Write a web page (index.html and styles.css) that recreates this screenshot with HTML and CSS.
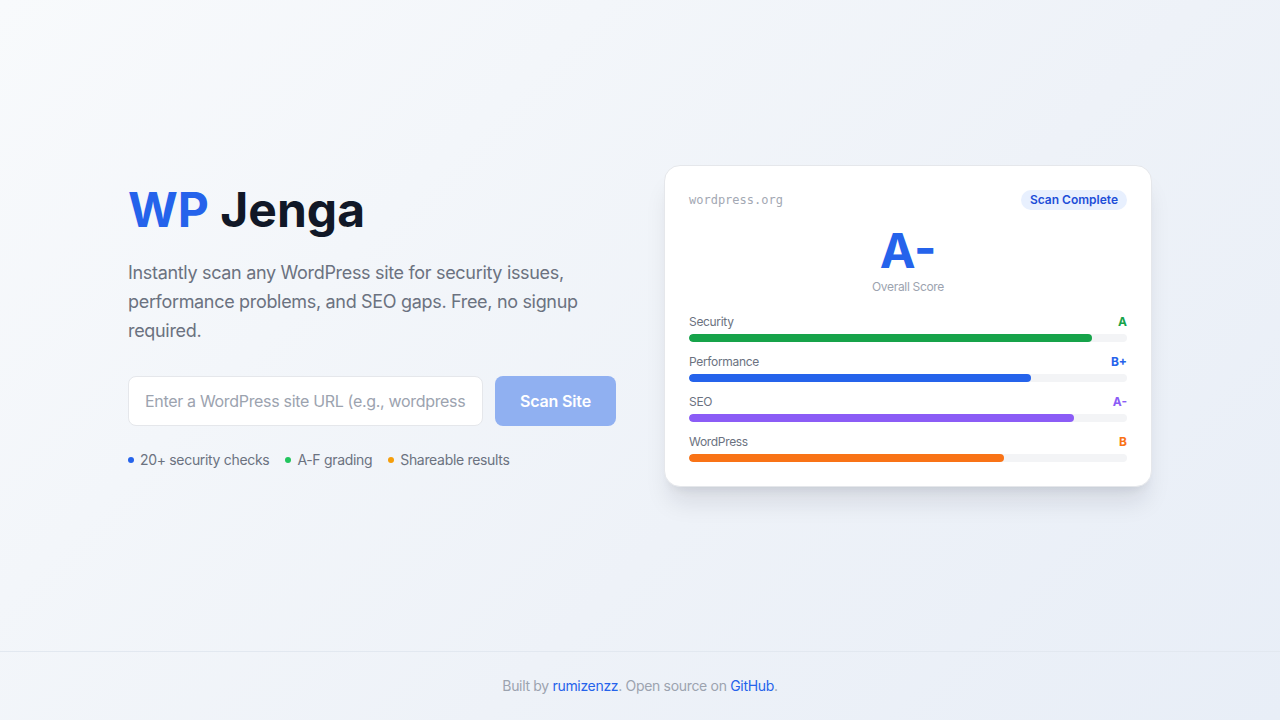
FILE: index.html
```html
<!DOCTYPE html>
<html lang="en">
<head>
<meta charset="utf-8">
<title>WP Jenga</title>
<link rel="stylesheet" href="styles.css">
</head>
<body>
<div class="page">
  <main class="main">
    <div class="container">
      <section class="intro">
        <h1 class="title"><span class="accent">WP</span> Jenga</h1>
        <p class="lead">Instantly scan any WordPress site for security issues, performance problems, and SEO gaps. Free, no signup required.</p>
        <form class="scan-form" onsubmit="return false">
          <input class="url-input" type="text" placeholder="Enter a WordPress site URL (e.g., wordpress.org)">
          <button class="scan-btn" type="button">Scan Site</button>
        </form>
        <ul class="features">
          <li class="feature"><span class="dot dot-blue"></span>20+ security checks</li>
          <li class="feature"><span class="dot dot-green"></span>A-F grading</li>
          <li class="feature"><span class="dot dot-orange"></span>Shareable results</li>
        </ul>
      </section>
      <section class="card">
        <div class="card-head">
          <span class="domain">wordpress.org</span>
          <span class="badge">Scan Complete</span>
        </div>
        <div class="overall">
          <div class="grade">A-</div>
          <div class="overall-label">Overall Score</div>
        </div>
        <div class="metrics">
          <div class="metric">
            <div class="metric-row"><span class="metric-name">Security</span><span class="metric-grade c-green">A</span></div>
            <div class="track"><div class="fill bg-green" style="width:92%"></div></div>
          </div>
          <div class="metric">
            <div class="metric-row"><span class="metric-name">Performance</span><span class="metric-grade c-blue">B+</span></div>
            <div class="track"><div class="fill bg-blue" style="width:78%"></div></div>
          </div>
          <div class="metric">
            <div class="metric-row"><span class="metric-name">SEO</span><span class="metric-grade c-purple">A-</span></div>
            <div class="track"><div class="fill bg-purple" style="width:88%"></div></div>
          </div>
          <div class="metric">
            <div class="metric-row"><span class="metric-name">WordPress</span><span class="metric-grade c-orange">B</span></div>
            <div class="track"><div class="fill bg-orange" style="width:72%"></div></div>
          </div>
        </div>
      </section>
    </div>
  </main>
  <footer class="footer">
    Built by <a href="#">rumizenzz</a>. Open source on <a href="#">GitHub</a>.
  </footer>
</div>
</body>
</html>
```
FILE: styles.css
```css
* { box-sizing: border-box; }
html, body { margin: 0; padding: 0; }
body {
  font-family: Inter, "Noto Sans", "Liberation Sans", sans-serif;
  letter-spacing: -0.02em;
  color: #111827;
  background: linear-gradient(135deg, #f8fafc 0%, #eef2f8 60%, #e8eef7 100%);
  min-height: 720px;
}
.page {
  display: flex;
  flex-direction: column;
  min-height: 720px;
}
.main {
  flex: 1;
  display: flex;
  align-items: center;
  justify-content: center;
}
.container {
  width: 1024px;
  display: grid;
  grid-template-columns: 1fr 1fr;
  gap: 48px;
  align-items: center;
}
.intro { padding-top: 2px; }
.title {
  margin: 0 0 22px;
  font-size: 48px;
  line-height: 52px;
  font-weight: 700;
  letter-spacing: 0;
  color: #111827;
}
.accent { color: #2563eb; }
.lead {
  margin: 0 0 31px;
  font-size: 18px;
  line-height: 29px;
  color: #6b7280;
}
.scan-form {
  display: flex;
  gap: 12px;
  margin: 0 0 24px;
}
.url-input {
  flex: 1;
  min-width: 0;
  height: 50px;
  padding: 0 16px;
  border: 1px solid #e5e7eb;
  border-radius: 8px;
  background: #fff;
  font-family: inherit;
  letter-spacing: -0.02em;
  font-size: 16px;
  color: #111827;
}
.url-input::placeholder { color: #9ca3af; }
.scan-btn {
  width: 121px;
  height: 50px;
  border: 0;
  border-radius: 8px;
  background: #90b0f1;
  color: #fff;
  font-family: inherit;
  letter-spacing: -0.01em;
  font-size: 16px;
  font-weight: 600;
}
.features {
  list-style: none;
  margin: 0;
  padding: 0;
  display: flex;
  gap: 16px;
  font-size: 14px;
  line-height: 20px;
  color: #6b7280;
}
.feature { display: flex; align-items: center; gap: 6px; }
.dot { width: 6px; height: 6px; border-radius: 50%; display: inline-block; }
.dot-blue { background: #2563eb; }
.dot-green { background: #22c55e; }
.dot-orange { background: #f59e0b; }

.card {
  background: #fff;
  border: 1px solid #e5e7eb;
  border-radius: 16px;
  padding: 24px;
  box-shadow: 0 20px 25px -5px rgba(15, 23, 42, 0.10), 0 8px 10px -6px rgba(15, 23, 42, 0.08);
}
.card-head {
  display: flex;
  justify-content: space-between;
  align-items: center;
  height: 20px;
  margin-bottom: 15px;
}
.domain {
  font-family: "DejaVu Sans Mono", "Liberation Mono", monospace;
  letter-spacing: 0;
  font-size: 12px;
  color: #a3a8b3;
}
.badge {
  background: #e8f0fe;
  color: #1d4ed8;
  font-size: 12px;
  font-weight: 600;
  letter-spacing: 0;
  line-height: 20px;
  padding: 0 9px;
  border-radius: 999px;
}
.overall { text-align: center; margin-bottom: 19px; }
.grade {
  font-size: 48px;
  line-height: 52px;
  font-weight: 700;
  letter-spacing: 0;
  color: #2563eb;
}
.overall-label {
  margin-top: 2px;
  font-size: 12px;
  line-height: 16px;
  color: #9ca3af;
}
.metrics { display: flex; flex-direction: column; gap: 11px; }
.metric-row {
  display: flex;
  justify-content: space-between;
  font-size: 12px;
  line-height: 16px;
  margin-bottom: 4px;
}
.metric-name { color: #6b7280; }
.metric-grade { font-weight: 700; letter-spacing: 0; }
.track {
  height: 8px;
  border-radius: 999px;
  background: #f3f4f6;
  overflow: hidden;
}
.metric + .metric { margin-top: 1px; }
.fill { height: 100%; border-radius: 999px; }
.c-green { color: #16a34a; }
.c-blue { color: #2563eb; }
.c-purple { color: #8b5cf6; }
.c-orange { color: #f97316; }
.bg-green { background: #16a34a; }
.bg-blue { background: #2563eb; }
.bg-purple { background: #8b5cf6; }
.bg-orange { background: #f97316; }

.footer {
  border-top: 1px solid #e2e8f0;
  padding: 24px 0;
  text-align: center;
  font-size: 14px;
  line-height: 20px;
  color: #9ca3af;
}
.footer a { color: #2563eb; text-decoration: none; }
```
